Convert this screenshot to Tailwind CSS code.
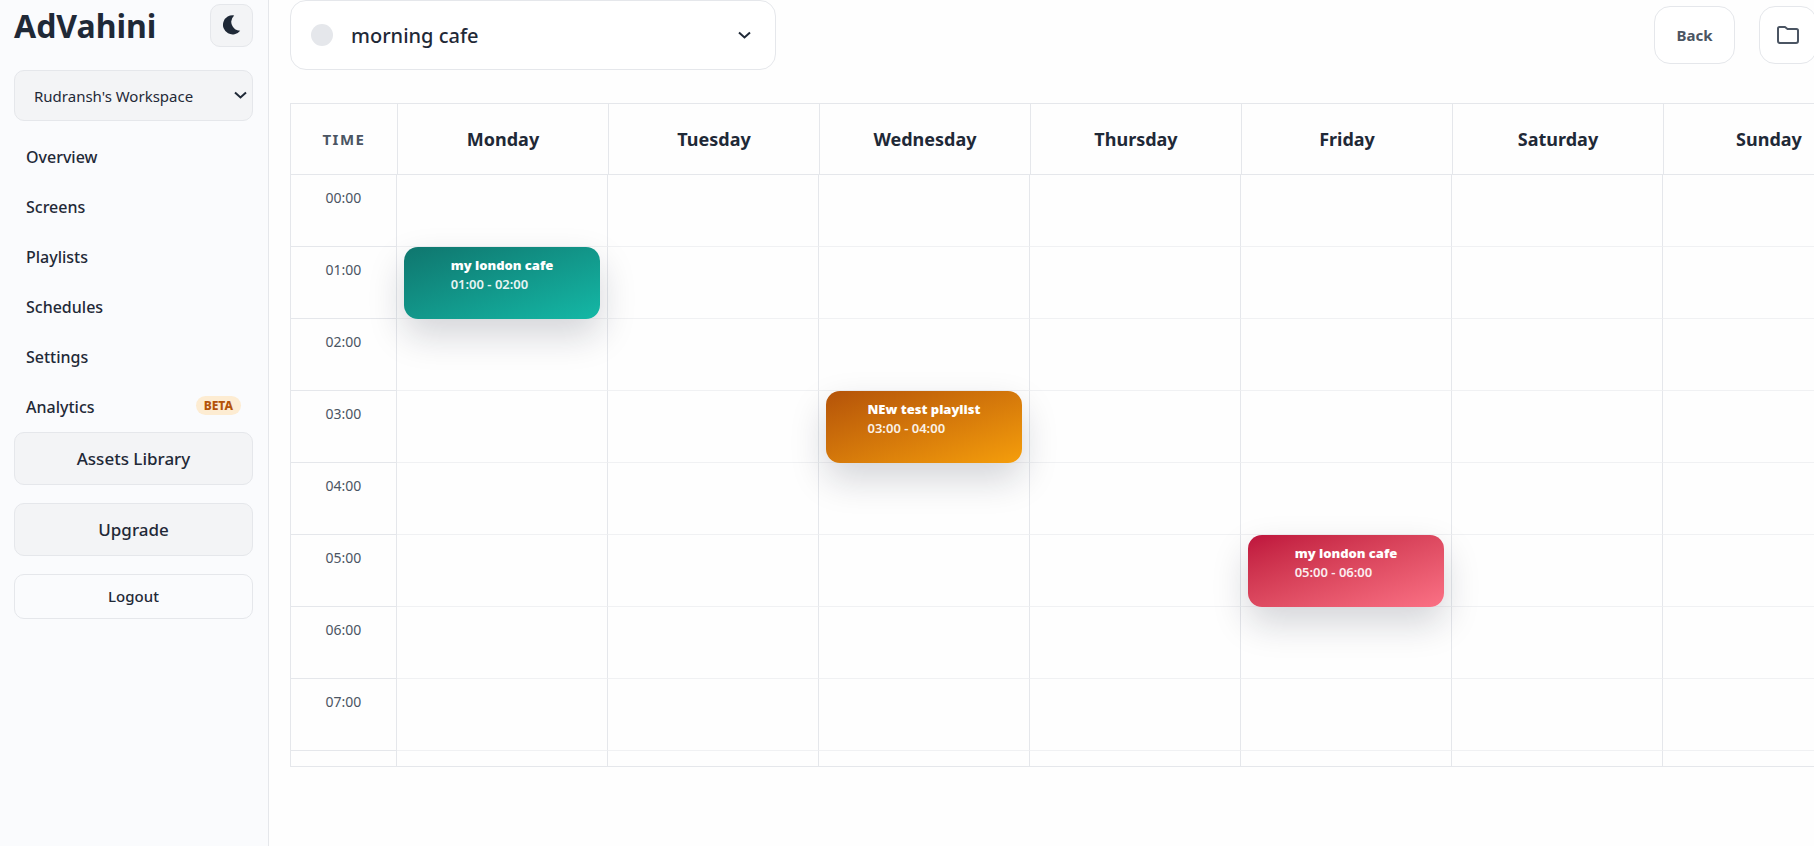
<!DOCTYPE html>
<html lang="en">

<head>
    <meta charset="UTF-8">
    <meta name="viewport" content="width=device-width, initial-scale=1.0">
    <title>AdVahini - Schedules</title>
    <script src="https://cdn.jsdelivr.net/npm/@tailwindcss/browser@4"></script>
</head>

<body class="flex min-h-screen overflow-x-hidden bg-[#fefefe] font-['Noto_Sans',sans-serif] text-[#1f2937]">
    <!-- Sidebar -->
    <aside class="flex w-[269px] shrink-0 flex-col border-r border-[#e5e7eb] bg-[#fafbfd] pt-[3px] pr-[15px] pl-[14px]">
        <div class="flex items-center justify-between">
            <h1 class="pt-px text-[32px] leading-[43px] font-bold">AdVahini</h1>
            <button type="button" aria-label="Toggle dark mode"
                class="flex size-[43px] items-center justify-center rounded-[10px] border border-[#e5e7eb] bg-[#f3f4f6]">
                <svg class="size-5" viewBox="0 0 20 20" fill="currentColor">
                    <path d="M12.2 .4A9.600 9.600 0 1 0 18.200 15.700A8.800 8.800 0 0 1 12.200 .4Z" />
                </svg>
            </button>
        </div>

        <div class="relative mt-[23px]">
            <select aria-label="Workspace"
                class="h-[51px] w-full appearance-none rounded-[10px] border border-[#e5e7eb] bg-[#f3f4f6] pt-[2px] pl-[19px] text-[15px]">
                <option>Rudransh's Workspace</option>
            </select>
            <svg class="pointer-events-none absolute top-[19px] right-[6px] h-3 w-[13px]" viewBox="0 0 13 12" fill="none"
                stroke="currentColor" stroke-width="2">
                <path d="M1 3.5L6.5 8.5L12 3.5" />
            </svg>
        </div>

        <nav class="mt-[11px] flex flex-col font-medium">
            <a href="#" class="flex h-[50px] items-center px-3">Overview</a>
            <a href="#" class="flex h-[50px] items-center px-3">Screens</a>
            <a href="#" class="flex h-[50px] items-center px-3">Playlists</a>
            <a href="#" class="flex h-[50px] items-center px-3">Schedules</a>
            <a href="#" class="flex h-[50px] items-center px-3">Settings</a>
            <a href="#" class="flex h-[50px] items-center justify-between px-3">
                Analytics
                <span class="mb-1 rounded-full bg-[#fdecd2] px-2 text-xs leading-[19px] font-extrabold text-[#b45309]">BETA</span>
            </a>
        </nav>

        <div class="flex flex-col gap-[18px]">
            <button type="button"
                class="h-[53px] rounded-[10px] border border-[#e5e7eb] bg-[#f3f4f6] text-[17px] font-medium">Assets
                Library</button>
            <button type="button"
                class="h-[53px] rounded-[10px] border border-[#e5e7eb] bg-[#f3f4f6] text-[17px] font-medium">Upgrade</button>
            <button type="button"
                class="h-[45px] rounded-[10px] border border-[#e5e7eb] text-[15px] font-medium">Logout</button>
        </div>
    </aside>

    <main class="min-w-0 flex-1 overflow-hidden pl-[21px]">
        <!-- Toolbar -->
        <div class="-mr-[3px] flex items-center gap-6">
            <div class="relative w-[486px]">
                <span class="absolute top-6 left-[21px] size-[22px] rounded-full bg-[#e5e7eb]"></span>
                <select aria-label="Schedule"
                    class="h-[70px] w-full appearance-none rounded-2xl border border-[#e5e7eb] bg-white pt-[2px] pl-[60px] text-xl font-medium">
                    <option>morning cafe</option>
                </select>
                <svg class="pointer-events-none absolute top-[29px] right-[25px] h-3 w-[13px]" viewBox="0 0 13 12" fill="none"
                    stroke="currentColor" stroke-width="2">
                    <path d="M1 3.5L6.5 8.5L12 3.5" />
                </svg>
            </div>
            <button type="button"
                class="ml-auto h-[58px] w-[81px] rounded-2xl border border-[#e5e7eb] bg-white text-[15px] font-bold text-[#4b5563]">Back</button>
            <button type="button" aria-label="Open folder"
                class="flex size-[58px] shrink-0 items-center justify-center rounded-2xl border border-[#e5e7eb] bg-white text-[#4b5563]">
                <svg class="size-6" viewBox="0 0 24 24" fill="none" stroke="currentColor" stroke-width="2"
                    stroke-linejoin="round">
                    <path d="M2 18V5.500A1.500 1.500 0 0 1 3.500 4H9L11.500 6H20.500A1.500 1.500 0 0 1 22 7.500V18A2 2 0 0 1 20 20H4A2 2 0 0 1 2 18Z" />
                </svg>
            </button>
        </div>

        <!-- Week grid -->
        <div class="mt-[33px] h-[664px] w-[1585px] overflow-hidden border border-[#e5e7eb]">
            <table class="w-full table-fixed border-separate border-spacing-0">
                <thead>
                    <tr id="days">
                        <th class="h-[71px] w-[106px] border-b border-[#e5e7eb] text-[15px] font-bold tracking-widest text-[#4b5563]">TIME</th>
                    </tr>
                </thead>
                <tbody id="hours"></tbody>
            </table>
        </div>
    </main>

    <script>
        const days = ['Monday', 'Tuesday', 'Wednesday', 'Thursday', 'Friday', 'Saturday', 'Sunday'];
        const events = [
            { day: 0, hour: 1, title: 'my london cafe', time: '01:00 - 02:00', color: 'from-[#0f766e] to-[#14b8a6]' },
            { day: 2, hour: 3, title: 'NEw test playlist', time: '03:00 - 04:00', color: 'from-[#b45309] to-[#f59e0b]' },
            { day: 4, hour: 5, title: 'my london cafe', time: '05:00 - 06:00', color: 'from-[#be123c] to-[#fb7185]' },
        ];

        days.forEach(day => {
            document.getElementById('days').innerHTML += `
                <th class="border-b border-l border-[#e5e7eb] text-lg font-bold">${day}</th>`;
        });

        // One row per hour, with the playlist card inside its day cell
        for (let hour = 0; hour < 9; hour++) {
            const cells = days.map((_, day) => {
                const event = events.find(e => e.day === day && e.hour === hour);
                const card = event ? `
                    <div class="absolute top-0 right-[7px] left-[7px] z-10 flex h-[72px] justify-center rounded-[14px] bg-linear-160 ${event.color} pt-[9px] text-white shadow-[0_16px_36px_rgba(15,23,42,0.18)]">
                        <div>
                            <p class="text-[13px] leading-[19px] font-black">${event.title}</p>
                            <p class="text-[13px] leading-[19px] font-semibold opacity-90">${event.time}</p>
                        </div>
                    </div>` : '';
                return `<td class="relative border-r border-b border-r-[#e5e7eb] border-b-[#f0f1f3] p-0">${card}</td>`;
            }).join('');
            const label = hour < 8 ? `0${hour}:00` : '';
            document.getElementById('hours').innerHTML += `
                <tr>
                    <th class="h-[72px] border-r border-b border-[#e5e7eb] pt-[13px] align-top text-sm leading-5 font-normal text-[#4b5563]">${label}</th>
                    ${cells}
                </tr>`;
        }
    </script>
</body>

</html>
